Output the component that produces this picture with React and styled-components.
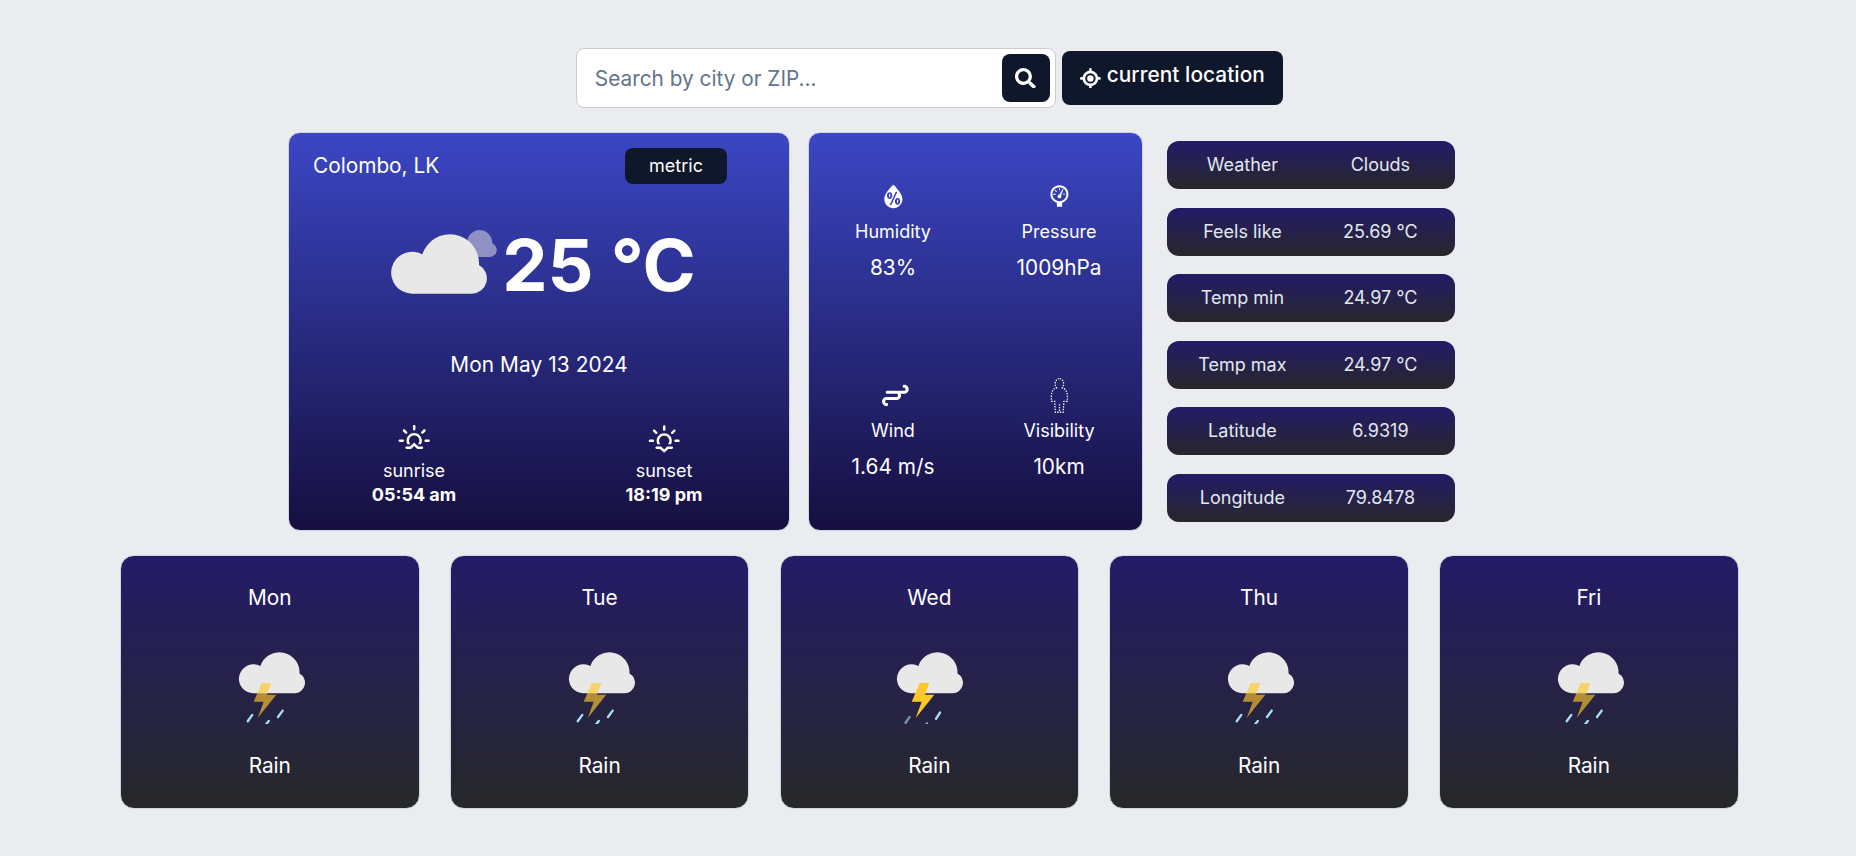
import React from 'react';
import styled, { createGlobalStyle } from 'styled-components';
import { FaSearch } from 'react-icons/fa';
import { FaLocationCrosshairs } from 'react-icons/fa6';
import { WiSunrise, WiSunset, WiHumidity, WiBarometer } from 'react-icons/wi';
import { TiWeatherWindy } from 'react-icons/ti';
import { GiInvisible } from 'react-icons/gi';

const Global = createGlobalStyle`
  * { box-sizing: border-box; }
  body { margin: 0; background: #ebecf0; font-family: Inter, "Liberation Sans", sans-serif; font-size: 18px; overflow: hidden; }
  button, input { font-family: inherit; }
  svg { display: block; flex: none; }
`;
const Page = styled.main`
  width: 1856px; height: 856px; padding: 48px 117.4px 0 120px;
  display: flex; flex-direction: column; gap: 24px;
`;
const SearchRow = styled.form`display: flex; justify-content: center; align-items: center; gap: 6px; height: 60px;`;
const SearchBox = styled.div`
  width: 480px; height: 60px; padding: 0 5px 0 18px; display: flex; align-items: center;
  background: #fff; border: 1px solid #cccccf; border-radius: 8px;
`;
const SearchInput = styled.input`
  flex: 1; min-width: 0; border: 0; outline: 0; padding: 0; background: none; font-size: 20.8px; color: #0f172a;
  &::placeholder { color: #64748b; opacity: 1; }
`;
const DarkButton = styled.button`
  display: flex; align-items: center; justify-content: center; border: 0; padding: 0; color: #fff;
  background: #0f172a; border-radius: 8px; width: ${p => p.$w}px; height: ${p => p.$h}px;
  font-size: ${p => p.$size || 18}px; font-weight: ${p => p.$weight || 400};
`;
const LocationLabel = styled.span`line-height: 30px; padding-bottom: 7px; margin-left: 6.2px; letter-spacing: 0.07px;`;
const UnitLabel = styled.span`padding-bottom: 1.5px;`;
const Overview = styled.section`display: flex; height: 399px; padding-left: 168px;`;
const Panel = styled.div`
  width: ${p => p.$w}px; border: 1px solid #cbd5e1; border-radius: 12px; color: #fff;
  background: linear-gradient(#3b46c4, #160f3f); margin-right: ${p => p.$mr}px;
`;
const CityRow = styled.div`
  display: flex; justify-content: space-between; align-items: center; height: 36px;
  margin: 15px 62px 0 24px; font-size: 20.8px;
`;
const City = styled.span`padding-bottom: 2px;`;
const TempRow = styled.div`
  display: flex; justify-content: center; align-items: center; height: 100px; margin-top: 31px;
  font-size: 72px; font-weight: 700; line-height: 100px;
`;
const DateLine = styled.div`margin-top: 34px; text-align: center; font-size: 20.8px; line-height: 32px; letter-spacing: 0.1px;`;
const SunRow = styled.div`display: grid; grid-template-columns: 1fr 1fr; margin-top: 39.6px;`;
const SunItem = styled.div`display: flex; flex-direction: column; align-items: center; line-height: 24px;`;
const StatsGrid = styled(Panel)`display: grid; grid-template: 199px 198px / 1fr 1fr; padding-left: 1px;`;
const Stat = styled.div`display: flex; flex-direction: column; align-items: center; padding-top: 45px;`;
const StatLabel = styled.span`line-height: 27px; margin-top: 3px;`;
const StatValue = styled.span`font-size: 20.8px; line-height: 31px; margin-top: 7px;`;
const Facts = styled.dl`margin: 0; width: 288px; display: flex; flex-direction: column; justify-content: space-around;`;
const Fact = styled.div`
  display: grid; grid-template-columns: 1fr 1fr; align-items: center; height: 48px; padding: 0 5.6px 0 6.4px;
  border-radius: 12px; background: linear-gradient(#241b68, #27272a); color: #e2e8f0; text-align: center; line-height: 48px;
  dt, dd { margin: 0; }
`;
const Forecast = styled.section`display: grid; grid-template-columns: repeat(5, 1fr); column-gap: 30.2px; height: 254px;`;
const DayCard = styled.article`
  border: 1px solid #cbd5e1; border-radius: 14px; background: linear-gradient(#241b68, #27282a);
  color: #fff; display: flex; flex-direction: column; align-items: center; font-size: 20.8px; line-height: 32px;
  padding-top: 26px;
`;
const DayIcon = styled.div`margin-top: 30px;`;
const Condition = styled.span`margin-top: 26px;`;

const CLOUD = 'M21 59.4A21 21 0 1 1 31 20A29.1 29.1 0 0 1 87.7 30.7A15.3 15.3 0 0 1 80.7 59.4Z';

const CloudsIcon = () => (
  <svg width="120" height="100" viewBox="0 0 120 100">
    <path d="M97.3 15A13 13 0 0 1 110.3 28.5A7 7 0 0 1 107.3 42H90V41L85 28A13 13 0 0 1 97.3 15Z" fill="#9090c3" />
    <path d={CLOUD} transform="translate(9.3 19.3)" fill="#e8e8e8" />
  </svg>
);
const StormIcon = ({ flash }) => (
  <svg width="80" height="80" viewBox={flash ? '1 0 80 80' : '0 0 80 80'}>
    <path d={CLOUD} transform="translate(9 8.3) scale(.69)" fill="#e8e8e8" />
    <path d="M31.7 39H41.3L37 50.7H46.3L27.7 74L33.7 57.7H23.7Z" fill="#ffc72c" opacity={flash ? 1 : 0.65} />
    <g stroke="#a3def5" strokeWidth="2.4" strokeLinecap="round">
      {flash ? (
        <>
          <path d="M21.6 72.9L17.6 78.7" opacity=".6" />
          <path d="M39 79.4L38 81" opacity=".8" />
          <path d="M52 68.6L48 74.8" />
        </>
      ) : (
        <>
          <path d="M22.3 70.9L17.7 77.3" />
          <path d="M38.8 76.9L34 83" />
          <path d="M52.7 66.6L48 73" />
        </>
      )}
    </g>
  </svg>
);

const STATS = [
  [WiHumidity, 'Humidity', '83%'],
  [WiBarometer, 'Pressure', '1009hPa'],
  [TiWeatherWindy, 'Wind', '1.64 m/s'],
  [GiInvisible, 'Visibility', '10km'],
];
const FACTS = [
  ['Weather', 'Clouds'],
  ['Feels like', '25.69 °C'],
  ['Temp min', '24.97 °C'],
  ['Temp max', '24.97 °C'],
  ['Latitude', '6.9319'],
  ['Longitude', '79.8478'],
];
const DAYS = ['Mon', 'Tue', 'Wed', 'Thu', 'Fri'];

export default function App() {
  return (
    <Page>
      <Global />
      <SearchRow>
        <SearchBox>
          <SearchInput placeholder="Search by city or ZIP..." />
          <DarkButton type="button" $w={48} $h={48}><FaSearch size={20.8} /></DarkButton>
        </SearchBox>
        <DarkButton type="button" $w={221} $h={54} $size={20.8} $weight={500}>
          <FaLocationCrosshairs size={20.8} />
          <LocationLabel>current location</LocationLabel>
        </DarkButton>
      </SearchRow>
      <Overview>
        <Panel $w={502} $mr={18}>
          <CityRow>
            <City>Colombo, LK</City>
            <DarkButton type="button" $w={102} $h={36}><UnitLabel>metric</UnitLabel></DarkButton>
          </CityRow>
          <TempRow><CloudsIcon />25 °C</TempRow>
          <DateLine>Mon May 13 2024</DateLine>
          <SunRow>
            <SunItem><WiSunrise size={38.4} />sunrise<b>05:54 am</b></SunItem>
            <SunItem><WiSunset size={38.4} />sunset<b>18:19 pm</b></SunItem>
          </SunRow>
        </Panel>
        <StatsGrid $w={335} $mr={24}>
          {STATS.map(([Icon, label, value]) => (
            <Stat key={label}>
              <Icon size={36.8} />
              <StatLabel>{label}</StatLabel>
              <StatValue>{value}</StatValue>
            </Stat>
          ))}
        </StatsGrid>
        <Facts>
          {FACTS.map(([name, value]) => <Fact key={name}><dt>{name}</dt><dd>{value}</dd></Fact>)}
        </Facts>
      </Overview>
      <Forecast>
        {DAYS.map(day => (
          <DayCard key={day}>
            {day}
            <DayIcon><StormIcon flash={day === 'Wed'} /></DayIcon>
            <Condition>Rain</Condition>
          </DayCard>
        ))}
      </Forecast>
    </Page>
  );
}
